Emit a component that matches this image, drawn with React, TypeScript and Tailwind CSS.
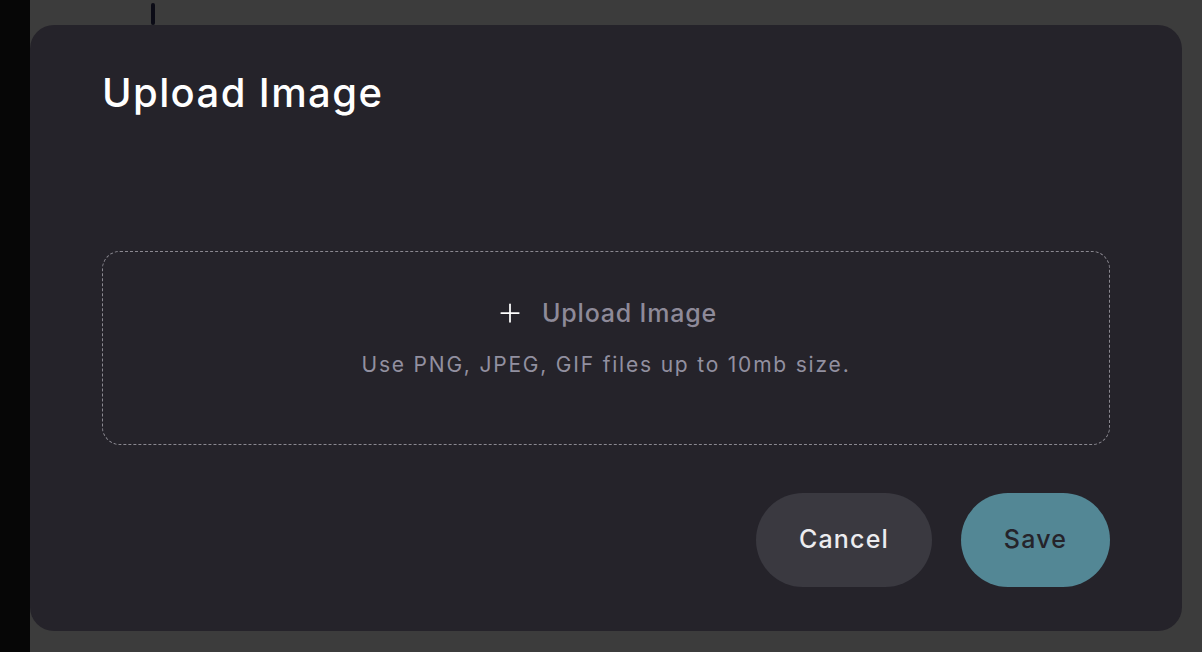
import { Plus } from "lucide-react";

export default function App() {
  return (
    <div
      className="flex h-[652px] w-[1202px] overflow-hidden bg-[#3c3c3c]"
      style={{ fontFamily: "Inter, 'Open Sans', sans-serif" }}
    >
      {/* left rail of the page behind the modal */}
      <div className="w-[30px] shrink-0 bg-[#060606]" />

      <div className="relative flex-1 pt-[25px]">
        {/* bit of the page peeking above the modal */}
        <div className="absolute left-[121px] top-[3px] h-[22px] w-[4px] rounded-full bg-[#0b0b16]" />

        {/* Modal */}
        <div className="flex h-[606px] w-[1152px] flex-col rounded-[24px] bg-[#25232a] px-[72px] pb-[44px] pt-[44px]">
          <h2 className="text-[40px] font-medium leading-[48px] tracking-[1.4px] text-white">
            Upload Image
          </h2>

          {/* Dropzone */}
          <div className="mt-[134px] flex h-[194px] flex-col items-center rounded-[18px] border border-dashed border-[#8a8890] pt-[43px]">
            <div className="flex items-center gap-[17px]">
              <Plus className="h-[30px] w-[30px] text-white" strokeWidth={1.4} />
              <span className="text-[25px] font-medium leading-[36px] tracking-[0.8px] text-[#8e8a99]">
                Upload Image
              </span>
            </div>
            <p className="mt-[18px] text-[21px] leading-[32px] tracking-[1.8px] text-[#9290a0]">
              Use PNG, JPEG, GIF files up to 10mb size.
            </p>
          </div>

          {/* Actions */}
          <div className="mt-auto flex justify-end gap-[29px]">
            <button className="h-[94px] w-[176px] rounded-full bg-[#3a3940] text-[25px] font-medium tracking-[1.2px] text-[#ececef]">
              Cancel
            </button>
            <button className="h-[94px] w-[149px] rounded-full bg-[#538795] text-[25px] font-medium tracking-[1.2px] text-[#25232a]">
              Save
            </button>
          </div>
        </div>
      </div>
    </div>
  );
}
